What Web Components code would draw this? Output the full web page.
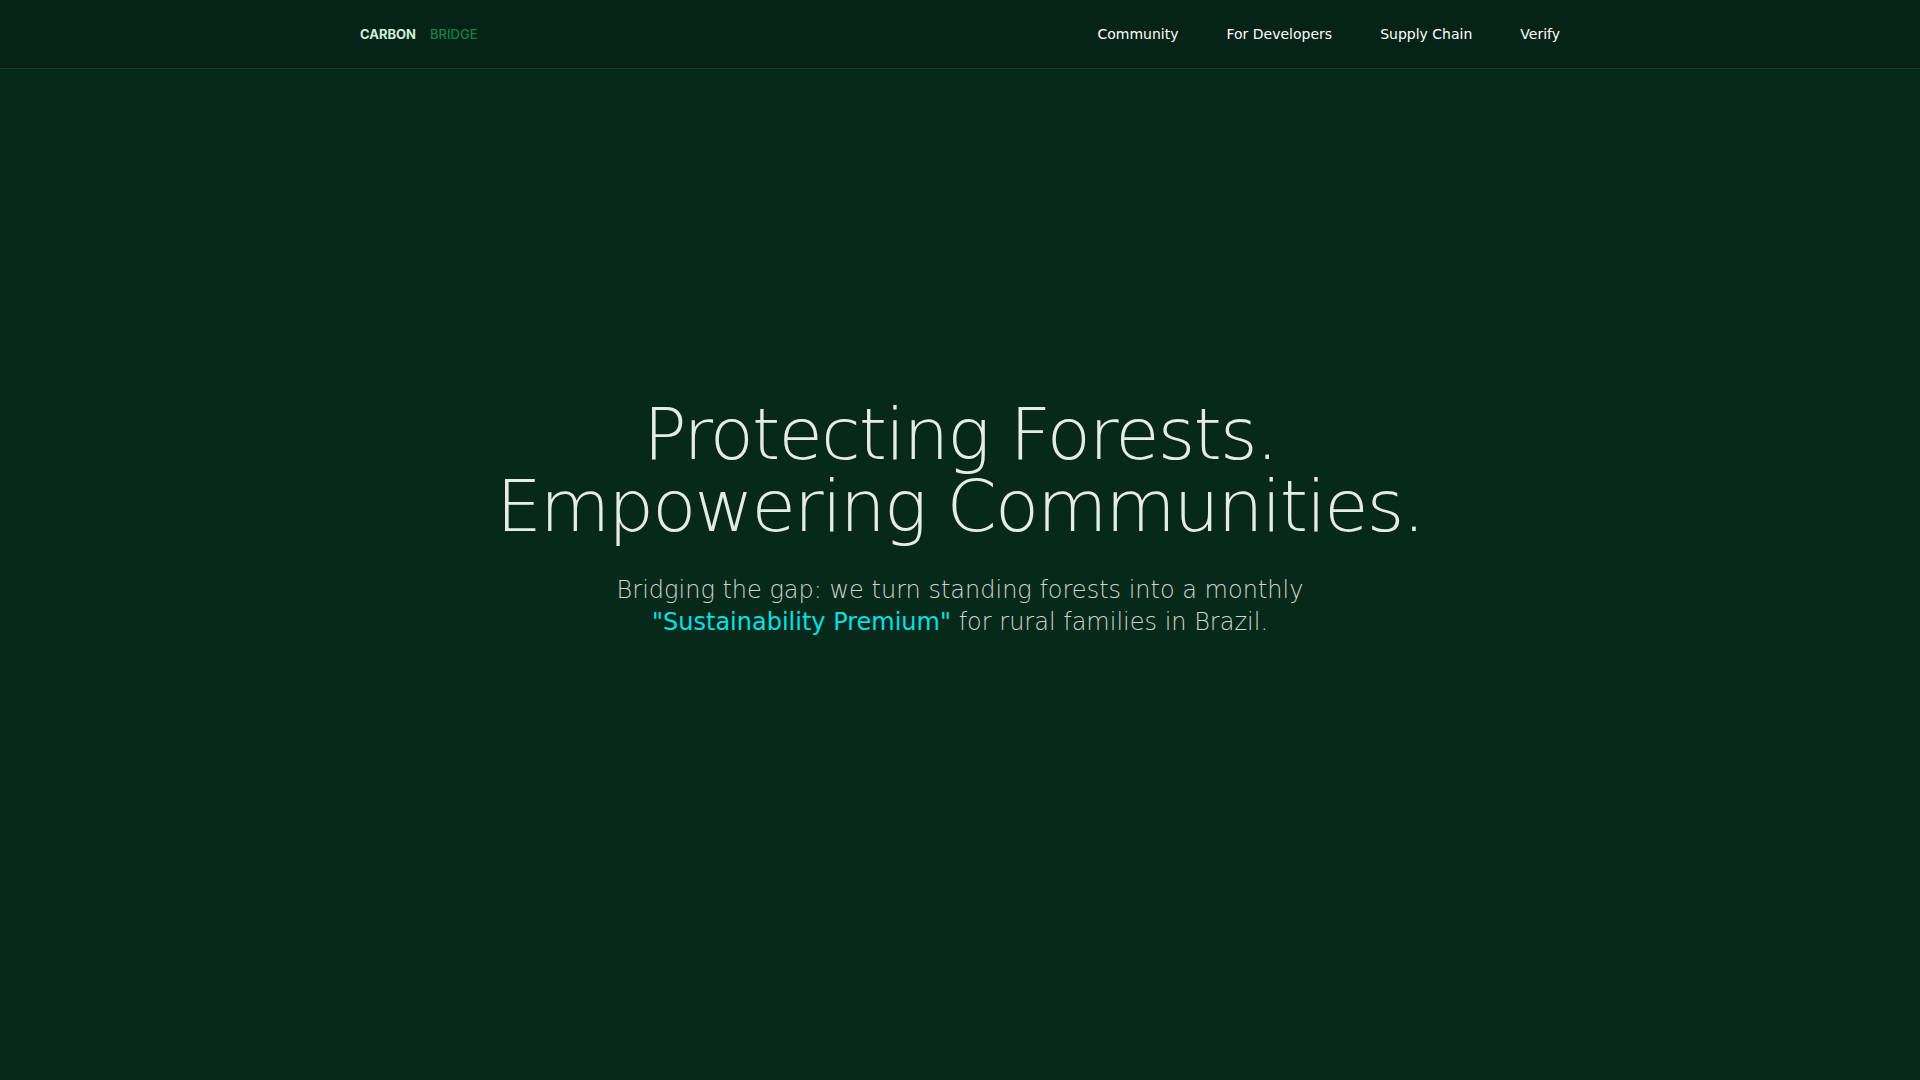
<!DOCTYPE html>
<html lang="en">
<head>
<meta charset="utf-8">
<meta name="viewport" content="width=device-width, initial-scale=1">
<title>Carbon Bridge</title>
<style>
  body { margin: 0; background: #07291a; color: #fff; font-family: "DejaVu Sans", sans-serif; }
</style>
</head>
<body>
<cb-page>
  <cb-header slot="header">
    <cb-logo slot="logo"></cb-logo>
    <cb-nav-link href="#community">Community</cb-nav-link>
    <cb-nav-link href="#developers">For Developers</cb-nav-link>
    <cb-nav-link href="#supply-chain">Supply Chain</cb-nav-link>
    <cb-nav-link href="#verify">Verify</cb-nav-link>
  </cb-header>
  <cb-hero>
    <span slot="title">Protecting Forests.<br>Empowering Communities.</span>
    Bridging the gap: we turn standing forests into a monthly <cb-accent>"Sustainability Premium"</cb-accent> for rural families in Brazil.
  </cb-hero>
</cb-page>
<script>
  const define = (name, html, setup) => customElements.define(name, class extends HTMLElement {
    constructor() {
      super();
      this.attachShadow({ mode: "open" }).innerHTML = html;
    }
    connectedCallback() { if (setup) setup(this); }
  });

  // The header shares the grid cell of the hero, so the hero fills the whole window.
  define("cb-page", `
    <style>
      :host { display: grid; min-height: 100vh; }
      ::slotted(*), main { grid-area: 1 / 1; }
      main { display: grid; }
      ::slotted(cb-header) { align-self: start; z-index: 1; }
    </style>
    <main><slot></slot></main>
    <slot name="header"></slot>`);

  define("cb-header", `
    <style>
      :host { display: block; background: #052316; border-bottom: 1px solid #1c3829; }
      header { display: flex; align-items: center; justify-content: space-between;
               max-width: 1200px; height: 68px; margin: 0 auto; }
      nav { display: flex; gap: 48px; }
    </style>
    <header><slot name="logo"></slot><nav aria-label="Main"><slot></slot></nav></header>`);

  define("cb-logo", `
    <style>
      :host { display: block; }
      a { display: flex; gap: 14px; font: 500 13px/20px Inter, sans-serif; color: #188048; text-decoration: none; }
      b { font-weight: 700; color: #cdeed9; }
    </style>
    <a href="#"><b>CARBON</b><span>BRIDGE</span></a>`);

  define("cb-nav-link", `
    <style>
      :host { display: block; font-size: 14px; line-height: 20px; }
      a { color: #fff; text-decoration: none; }
    </style>
    <a><slot></slot></a>`,
    el => { el.shadowRoot.querySelector("a").href = el.getAttribute("href"); });

  define("cb-hero", `
    <style>
      :host { display: flex; flex-direction: column; align-items: center; justify-content: center; text-align: center; }
      /* Display headings are set with tight tracking. */
      h1 { margin: 0 0 32px; font-size: 72px; line-height: 72px; font-weight: 200; letter-spacing: -0.025em; color: #e5ebe6; }
      p { max-width: 768px; margin: 0 0 44px; font-size: 24px; line-height: 32px; font-weight: 200; color: #cdd4d1; }
    </style>
    <h1><slot name="title"></slot></h1>
    <p><slot></slot></p>`);

  define("cb-accent", `
    <style>:host { display: inline; color: #00e0e6; font-weight: 400; }</style><slot></slot>`);
</script>
</body>
</html>
